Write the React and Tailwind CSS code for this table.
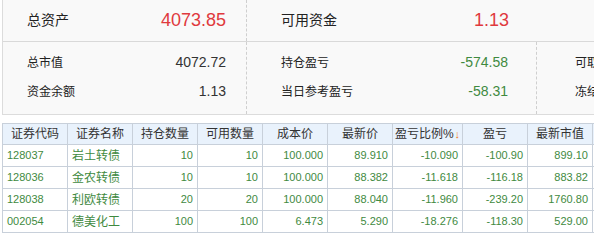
import React from "react";

const rows = [
  ["128037", "岩土转债", "10", "10", "100.000", "89.910", "-10.090", "-100.90", "899.10"],
  ["128036", "金农转债", "10", "10", "100.000", "88.382", "-11.618", "-116.18", "883.82"],
  ["128038", "利欧转债", "20", "20", "100.000", "88.040", "-11.960", "-239.20", "1760.80"],
  ["002054", "德美化工", "100", "100", "6.473", "5.290", "-18.276", "-118.30", "529.00"],
];

const widths = ["w-[65px]", "w-[65px]", "w-[65px]", "w-[65px]", "w-[65px]", "w-[65px]", "w-[70px]", "w-[65px]", "w-[65px]"];
const headers = ["证券代码", "证券名称", "持仓数量", "可用数量", "成本价", "最新价", "盈亏比例%", "盈亏", "最新市值"];

export default function App() {
  return (
    <div className="w-[594px] h-[249px] overflow-hidden bg-white font-['Liberation_Sans','Noto_Sans_CJK_SC',sans-serif]">
      {/* summary panel */}
      <div className="ml-[2px] w-[700px] h-[115px] border-l border-b border-[#dcdcdc] bg-[#f9f9f9]">
        <div className="flex h-[42px] border-b border-[#d9d9d9]">
          <div className="w-[244px] flex items-center justify-between pl-[24px] pr-[20px] border-r border-dashed border-[#cfcfcf]">
            <span className="text-[14px] text-[#222]">总资产</span>
            <span className="text-[18px] text-[#e0393e]">4073.85</span>
          </div>
          <div className="w-[290px] flex items-center justify-between pl-[34px] pr-[28px]">
            <span className="text-[14px] text-[#222]">可用资金</span>
            <span className="text-[18px] text-[#e0393e]">1.13</span>
          </div>
        </div>
        <div className="flex h-[72px]">
          <div className="w-[244px] pt-[6px] pl-[24px] pr-[20px] border-r border-dashed border-[#cfcfcf]">
            <div className="h-[29px] flex items-center justify-between">
              <span className="text-[12px] text-[#222]">总市值</span>
              <span className="text-[14px] text-[#333]">4072.72</span>
            </div>
            <div className="h-[29px] flex items-center justify-between">
              <span className="text-[12px] text-[#222]">资金余额</span>
              <span className="text-[14px] text-[#333]">1.13</span>
            </div>
          </div>
          <div className="w-[290px] pt-[6px] pl-[34px] pr-[28px] border-r border-dashed border-[#cfcfcf]">
            <div className="h-[29px] flex items-center justify-between">
              <span className="text-[12px] text-[#222]">持仓盈亏</span>
              <span className="text-[14px] text-[#3f8a3f]">-574.58</span>
            </div>
            <div className="h-[29px] flex items-center justify-between">
              <span className="text-[12px] text-[#222]">当日参考盈亏</span>
              <span className="text-[14px] text-[#3f8a3f]">-58.31</span>
            </div>
          </div>
          <div className="w-[160px] pt-[6px] pl-[38px]">
            <div className="h-[29px] flex items-center">
              <span className="text-[12px] text-[#222] whitespace-nowrap">可取资金</span>
            </div>
            <div className="h-[29px] flex items-center">
              <span className="text-[12px] text-[#222] whitespace-nowrap">冻结资金</span>
            </div>
          </div>
        </div>
      </div>

      {/* table */}
      <div className="mt-[8px] ml-[2px] w-[700px] border-t border-l border-[#c8d0da]">
        <div className="flex h-[21px] border-b border-[#c8d0da] bg-[#e9f2fc]">
          {headers.map((h, i) => (
            <div key={i} className={`${widths[i]} shrink-0 border-r border-[#c8d0da] flex items-center justify-center text-[12px] text-[#333] whitespace-nowrap`}>
              {h}
              {i === 6 && <span className="text-[#f07f1c] text-[11px] ml-[1px]">↓</span>}
            </div>
          ))}
        </div>
        {rows.map((r, ri) => (
          <div key={ri} className="flex h-[22px] border-b border-[#c8d0da]">
            {r.map((c, i) => (
              <div
                key={i}
                className={`${widths[i]} shrink-0 border-r border-[#c8d0da] flex items-center whitespace-nowrap text-[#3f8a3f] ${
                  i === 0 ? "justify-start pl-[4px] text-[11px]" : i === 1 ? "justify-start pl-[4px] text-[12px]" : "justify-end pr-[4px] text-[11px]"
                }`}
              >
                {c}
              </div>
            ))}
          </div>
        ))}
      </div>
    </div>
  );
}
